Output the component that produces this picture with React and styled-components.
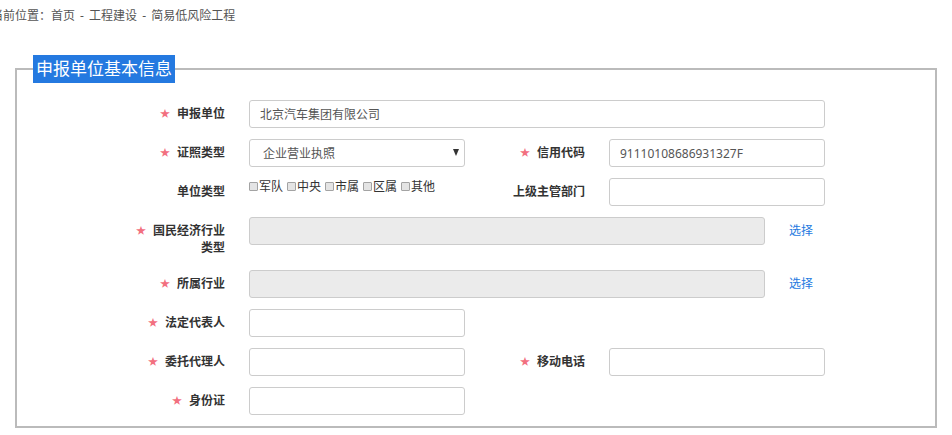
import React from 'react'
import styled, { createGlobalStyle } from 'styled-components'

const GlobalStyle = createGlobalStyle`
  html, body {
    margin: 0;
    padding: 0;
    background: #fff;
  }
  body {
    font-family: "Noto Sans", "Noto Sans CJK SC", sans-serif;
    font-size: 12px;
    color: #333;
  }
`

const Page = styled.div`
  width: 952px;
  overflow: hidden;
`

const Breadcrumb = styled.div`
  margin-left: -9px;
  padding-top: 7px;
  line-height: 18px;
  font-size: 12px;
  word-spacing: 2px;
  color: #555;
  white-space: nowrap;
`

const Panel = styled.fieldset`
  margin: 30px 15px 0;
  padding: 0;
  border: 2px solid #bbb;
  min-width: 0;
`

const Legend = styled.legend`
  margin-left: 16px;
  padding: 0 3px;
  height: 28px;
  line-height: 28px;
  background: #2479e0;
  color: #fff;
  font-size: 17px;
`

const Body = styled.div`
  padding: 17px 0 0 108px;
`

const Row = styled.div`
  display: flex;
  align-items: flex-start;
  gap: 20px;
  margin-bottom: 11px;
`

const Cell = styled.div`
  display: flex;
  align-items: flex-start;
  gap: 24px;
`

const Label = styled.label`
  width: 100px;
  flex: none;
  text-align: right;
  font-weight: bold;
  font-size: 12px;
  line-height: 17px;
  padding: 5px 0 3px;
  color: #333;
`

const Star = styled.span`
  color: #f2707f;
  font-size: 10px;
  font-weight: normal;
  margin-right: 7px;
  vertical-align: 1px;
`

const Input = styled.input`
  box-sizing: border-box;
  width: ${p => p.$w}px;
  height: 28px;
  padding: 0 10px;
  border: 1px solid #ccc;
  border-radius: 3px;
  background: ${p => (p.disabled ? '#ebebeb' : '#fff')};
  font-family: "Noto Sans", "Noto Sans CJK SC", sans-serif;
  font-size: 12px;
  color: #555;
  outline: none;
`

const SelectWrap = styled.div`
  position: relative;
  width: 216px;
  height: 28px;
`

const Select = styled.select`
  appearance: none;
  -webkit-appearance: none;
  box-sizing: border-box;
  width: 100%;
  height: 28px;
  padding: 0 20px 0 13px;
  border: 1px solid #ccc;
  border-radius: 3px;
  background: #fff;
  font-family: "Noto Sans", "Noto Sans CJK SC", sans-serif;
  font-size: 12px;
  color: #555;
  outline: none;
`

const Arrow = styled.span`
  position: absolute;
  right: 6px;
  top: 10px;
  width: 0;
  height: 0;
  border-left: 3.5px solid transparent;
  border-right: 3.5px solid transparent;
  border-top: 7px solid #333;
  pointer-events: none;
`

const Checks = styled.div`
  display: flex;
  width: 216px;
  line-height: 17px;
  font-size: 12px;
  color: #333;
`

const Check = styled.span`
  display: inline-flex;
  align-items: center;
  margin-right: 4px;
  &::before {
    content: '';
    box-sizing: border-box;
    width: 9px;
    height: 9px;
    margin-right: 1px;
    border: 1px solid #a3a3a3;
    border-radius: 1px;
    background: #e4e4e4;
  }
`

const Pick = styled.a`
  color: #2479e0;
  font-size: 12px;
  line-height: 17px;
  padding-top: 5px;
  text-decoration: none;
  cursor: pointer;
`

const Field = ({ label, required, children }) => (
  <Cell>
    <Label>
      {required && <Star>★</Star>}
      {label}
    </Label>
    {children}
  </Cell>
)

export default function App() {
  return (
    <Page>
      <GlobalStyle />
      <Breadcrumb>当前位置：首页 - 工程建设 - 简易低风险工程</Breadcrumb>
      <Panel>
        <Legend>申报单位基本信息</Legend>
        <Body>
          <Row>
            <Field label="申报单位" required>
              <Input $w={576} defaultValue="北京汽车集团有限公司" />
            </Field>
          </Row>

          <Row>
            <Field label="证照类型" required>
              <SelectWrap>
                <Select defaultValue="企业营业执照">
                  <option>企业营业执照</option>
                </Select>
                <Arrow />
              </SelectWrap>
            </Field>
            <Field label="信用代码" required>
              <Input $w={216} defaultValue="91110108686931327F" />
            </Field>
          </Row>

          <Row>
            <Field label="单位类型">
              <Checks>
                {['军队', '中央', '市属', '区属', '其他'].map(t => (
                  <Check key={t}>{t}</Check>
                ))}
              </Checks>
            </Field>
            <Field label="上级主管部门">
              <Input $w={216} />
            </Field>
          </Row>

          <Row>
            <Field label="国民经济行业类型" required>
              <Input $w={516} disabled />
              <Pick>选择</Pick>
            </Field>
          </Row>

          <Row>
            <Field label="所属行业" required>
              <Input $w={516} disabled />
              <Pick>选择</Pick>
            </Field>
          </Row>

          <Row>
            <Field label="法定代表人" required>
              <Input $w={216} />
            </Field>
          </Row>

          <Row>
            <Field label="委托代理人" required>
              <Input $w={216} />
            </Field>
            <Field label="移动电话" required>
              <Input $w={216} />
            </Field>
          </Row>

          <Row>
            <Field label="身份证" required>
              <Input $w={216} />
            </Field>
          </Row>
        </Body>
      </Panel>
    </Page>
  )
}
